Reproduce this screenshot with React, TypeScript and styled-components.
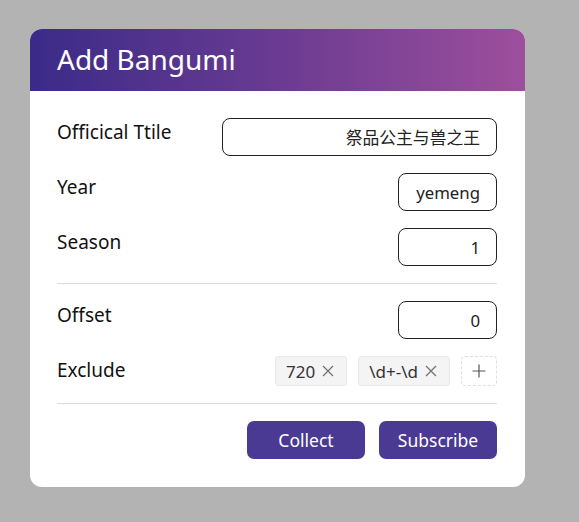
import React from 'react'
import styled, { createGlobalStyle } from 'styled-components'

const GlobalStyle = createGlobalStyle`
  html, body {
    margin: 0;
    padding: 0;
    background: #b3b3b3;
    font-family: "Noto Sans", "Noto Sans CJK SC", sans-serif;
  }
`

type Field = { label: string; value: string; width: number }

const mainFields: Field[] = [
  { label: 'Officical Ttile', value: '祭品公主与兽之王', width: 275 },
  { label: 'Year', value: 'yemeng', width: 99 },
  { label: 'Season', value: '1', width: 99 },
]

const excludes = ['720', '\\d+-\\d']

function App() {
  return (
    <Page>
      <GlobalStyle />
      <Card>
        <Header>Add Bangumi</Header>
        <Body>
          {mainFields.map((f) => (
            <Row key={f.label}>
              <Label>{f.label}</Label>
              <Input style={{ width: f.width }} defaultValue={f.value} />
            </Row>
          ))}
          <Divider />
          <Row>
            <Label>Offset</Label>
            <Input style={{ width: 99 }} defaultValue="0" />
          </Row>
          <Row>
            <Label>Exclude</Label>
            <Tags>
              {excludes.map((t) => (
                <Tag key={t}>
                  {t}
                  <Close>
                    <svg width="12" height="12" viewBox="0 0 12 12">
                      <path d="M1 1 L11 11 M11 1 L1 11" stroke="#707276" strokeWidth="1.3" fill="none" />
                    </svg>
                  </Close>
                </Tag>
              ))}
              <AddTag>
                <svg width="14" height="14" viewBox="0 0 14 14">
                  <path d="M7 0.5 V13.5 M0.5 7 H13.5" stroke="#555" strokeWidth="1.2" fill="none" />
                </svg>
              </AddTag>
            </Tags>
          </Row>
          <Divider />
          <Footer>
            <Button>Collect</Button>
            <Button>Subscribe</Button>
          </Footer>
        </Body>
      </Card>
    </Page>
  )
}

export default App

const Page = styled.div`
  width: 579px;
  height: 522px;
  padding: 29px 0 0 30px;
  box-sizing: border-box;
`

const Card = styled.div`
  width: 495px;
  height: 458px;
  background: #ffffff;
  border-radius: 12px;
  overflow: hidden;
  display: flex;
  flex-direction: column;
`

const Header = styled.div`
  height: 62px;
  flex-shrink: 0;
  display: flex;
  align-items: center;
  padding-left: 27px;
  box-sizing: border-box;
  background: linear-gradient(90deg, #3a2b88 0%, #6a3b92 50%, #9d4f9c 100%);
  color: #ffffff;
  font-size: 28px;
  font-weight: 400;
  padding-bottom: 2px;
`

const Body = styled.div`
  padding: 27px 28px 28px 27px;
  display: flex;
  flex-direction: column;
  gap: 17px;
`

const Row = styled.div`
  display: flex;
  justify-content: space-between;
  align-items: flex-start;
`

const Label = styled.div`
  font-size: 19px;
  line-height: 28px;
  color: #111;
`

const Input = styled.input`
  height: 38px;
  box-sizing: border-box;
  border: 1px solid #222;
  border-radius: 8px;
  padding: 0 16px;
  text-align: right;
  font-family: "Noto Sans", "Noto Sans CJK SC", sans-serif;
  font-size: 16.8px;
  color: #222;
  outline: none;
`

const Divider = styled.div`
  height: 1px;
  background: #d9dce7;
`

const Tags = styled.div`
  display: flex;
  gap: 11px;
  align-items: center;
`

const Tag = styled.div`
  height: 30px;
  box-sizing: border-box;
  display: flex;
  align-items: center;
  gap: 7px;
  padding: 0 12px 0 10px;
  background: #f4f4f5;
  border: 1px solid #e9e9eb;
  border-radius: 3px;
  font-size: 17px;
  color: #333;
`

const Close = styled.span`
  display: flex;
  align-items: center;
`

const AddTag = styled.div`
  width: 36px;
  height: 30px;
  box-sizing: border-box;
  border: 1px dashed #dcdfe6;
  border-radius: 4px;
  display: flex;
  align-items: center;
  justify-content: center;
`

const Footer = styled.div`
  display: flex;
  justify-content: flex-end;
  gap: 14px;
`

const Button = styled.button`
  width: 118px;
  height: 38px;
  border: none;
  border-radius: 7px;
  background: #4b3a93;
  color: #ffffff;
  font-family: "Noto Sans", sans-serif;
  font-size: 17.5px;
  cursor: pointer;
`
